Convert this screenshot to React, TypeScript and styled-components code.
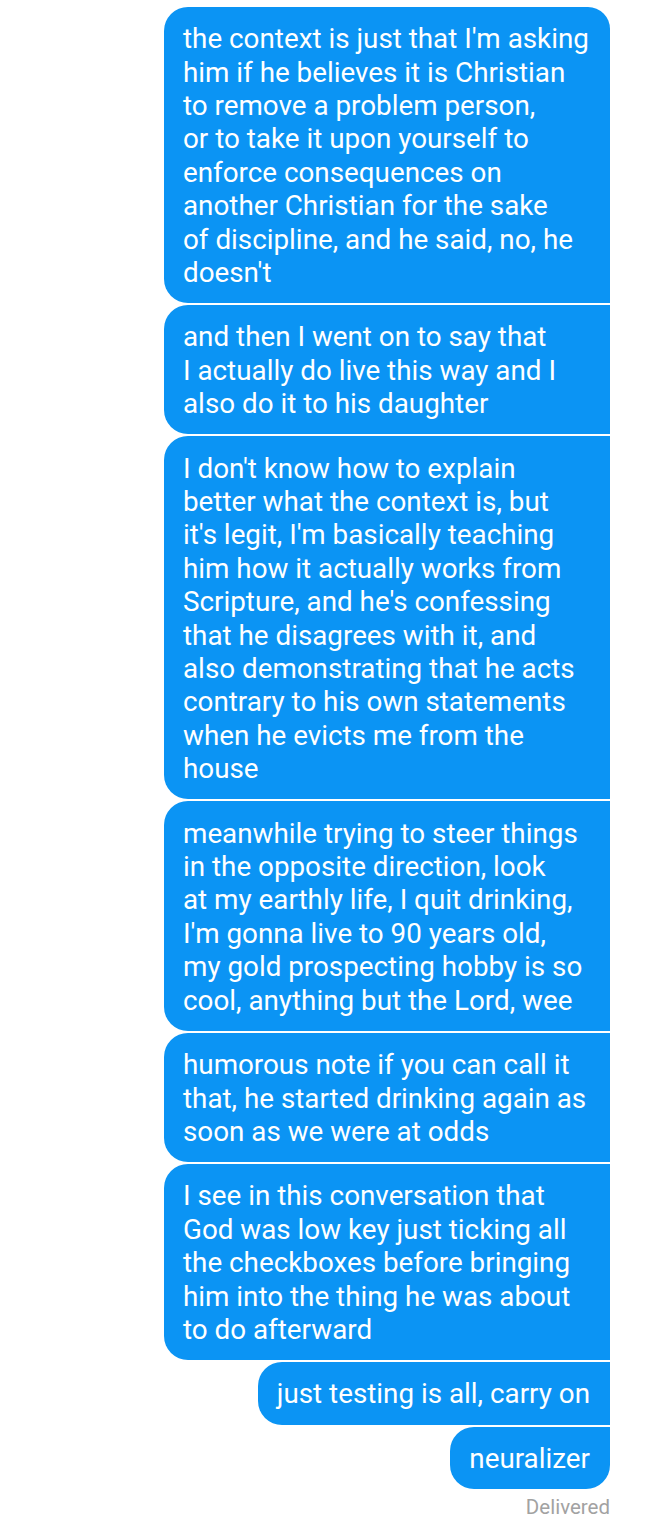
import React from "react";
import styled, { createGlobalStyle } from "styled-components";

const GlobalStyle = createGlobalStyle`
  html, body {
    margin: 0;
    padding: 0;
    background: #ffffff;
  }
  body {
    font-family: Roboto, "Noto Sans", "Liberation Sans", sans-serif;
  }
`;

const Thread = styled.div`
  width: 648px;
  min-height: 1526px;
  box-sizing: border-box;
  padding: 7px 38px 0 0;
  display: flex;
  flex-direction: column;
  align-items: flex-end;
  gap: 2px;
  background: #ffffff;
`;

type BubbleProps = { $wide?: boolean; $first?: boolean; $last?: boolean };

const Bubble = styled.div<BubbleProps>`
  box-sizing: border-box;
  width: ${(p) => (p.$wide ? "446px" : "auto")};
  max-width: 446px;
  padding: 15.2px 20px 13.8px 19px;
  background: #0b94f4;
  color: #ffffff;
  font-size: 27.8px;
  line-height: 33.4px;
  letter-spacing: 0;
  border-radius: 24px ${(p) => (p.$first ? "22px" : "0")}
    ${(p) => (p.$last ? "24px" : "0")} 24px;
  white-space: pre-line;
`;

const Status = styled.div`
  margin-top: 4px;
  font-size: 20.5px;
  line-height: 24px;
  color: #a2a2a2;
`;

const messages: { text: string; wide?: boolean }[] = [
  {
    wide: true,
    text: "the context is just that I'm asking\nhim if he believes it is Christian\nto remove a problem person,\nor to take it upon yourself to\nenforce consequences on\nanother Christian for the sake\nof discipline, and he said, no, he\ndoesn't",
  },
  {
    wide: true,
    text: "and then I went on to say that\nI actually do live this way and I\nalso do it to his daughter",
  },
  {
    wide: true,
    text: "I don't know how to explain\nbetter what the context is, but\nit's legit, I'm basically teaching\nhim how it actually works from\nScripture, and he's confessing\nthat he disagrees with it, and\nalso demonstrating that he acts\ncontrary to his own statements\nwhen he evicts me from the\nhouse",
  },
  {
    wide: true,
    text: "meanwhile trying to steer things\nin the opposite direction, look\nat my earthly life, I quit drinking,\nI'm gonna live to 90 years old,\nmy gold prospecting hobby is so\ncool, anything but the Lord, wee",
  },
  {
    wide: true,
    text: "humorous note if you can call it\nthat, he started drinking again as\nsoon as we were at odds",
  },
  {
    wide: true,
    text: "I see in this conversation that\nGod was low key just ticking all\nthe checkboxes before bringing\nhim into the thing he was about\nto do afterward",
  },
  { text: "just testing is all, carry on" },
  { text: "neuralizer" },
];

export default function App() {
  return (
    <>
      <GlobalStyle />
      <Thread>
        {messages.map((m, i) => (
          <Bubble
            key={i}
            $wide={m.wide}
            $first={i === 0}
            $last={i === messages.length - 1}
          >
            {m.text}
          </Bubble>
        ))}
        <Status>Delivered</Status>
      </Thread>
    </>
  );
}
